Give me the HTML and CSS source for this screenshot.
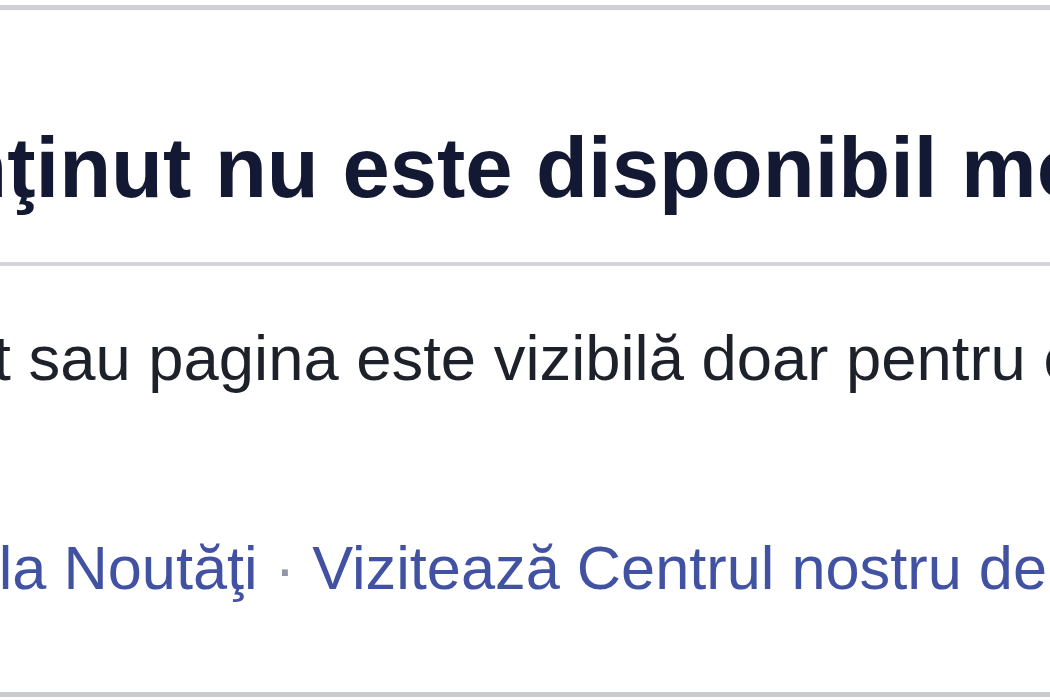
FILE: index.html
```html
<!DOCTYPE html>
<html>
<head>
    <title>Conţinut indisponibil</title>
    <link rel="stylesheet" href="styles.css">
</head>
<body>
    <div class="frame">
        <h1 class="title"><span class="shift-title">Acest conţinut nu este disponibil momentan</span></h1>
        <p class="message"><span class="shift-message">Linkul pe care l-ai urmat poate fi expirat sau pagina este vizibilă doar pentru o audienţă din care nu faci parte.</span></p>
        <div class="links"><span class="shift-links"><a href="#">Înapoi la pagina anterioară</a> <span class="dot">·</span> <a href="#">Mergi la Noutăţi</a> <span class="dot">·</span> <a href="#">Vizitează Centrul nostru de ajutor</a></span></div>
    </div>
</body>
</html>
```

FILE: styles.css
```css
html, body {
    margin: 0;
    padding: 0;
    background-color: #fff;
}
body {
    font-family: "Liberation Sans", Arial, sans-serif;
    overflow: hidden;
}
.frame {
    margin-top: 5px;
    border-top: 5px solid #cfd1d5;
    border-bottom: 5px solid #c9cbcf;
    overflow: hidden;
    white-space: nowrap;
}
.title {
    margin: 0;
    padding: 108px 0 44px 0;
    font-size: 85px;
    line-height: 100px;
    font-weight: bold;
    color: #131833;
    border-bottom: 4px solid #d4d6da;
}
.shift-title {
    display: inline-block;
    margin-left: -399px;
}
.message {
    margin: 52px 0 0 0;
    font-size: 63.4px;
    line-height: 80px;
    color: #1d2129;
}
.shift-message {
    display: inline-block;
    margin-left: -1099px;
}
.links {
    margin-top: 130px;
    padding-bottom: 84px;
    font-size: 61.3px;
    line-height: 80px;
}
.shift-links {
    display: inline-block;
    margin-left: -952px;
}
.links a {
    color: #4252a3;
    text-decoration: none;
}
.dot {
    color: #9197a6;
}
```
